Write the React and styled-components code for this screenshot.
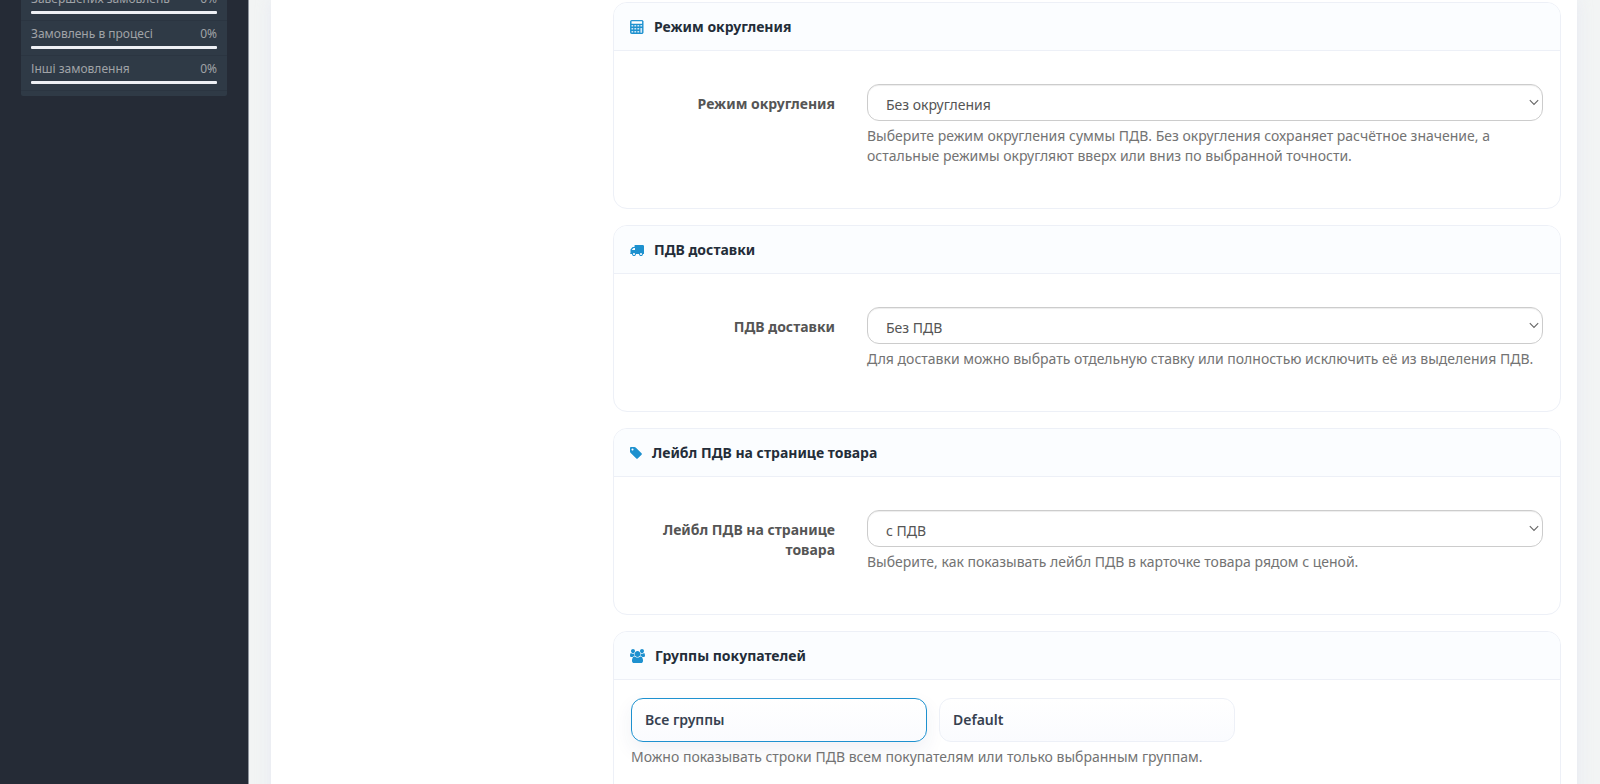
import React, { useId, useState } from "react";
import styled, { createGlobalStyle } from "styled-components";

const GlobalStyle = createGlobalStyle`
  *, *::before, *::after { box-sizing: border-box; }
  body {
    margin: 0;
    font-family: "Noto Sans", "Open Sans", sans-serif;
    font-size: 14px;
    line-height: 20px;
    color: #555;
    background: #f2f4f4;
  }
`;

const Page = styled.div`
  display: flex;
  height: 100vh;
  overflow: hidden;
`;

const Sidebar = styled.aside`
  flex: 0 0 249px;
  padding: 0 21px;
  background: #252b36;
  border-right: 1px solid #8f959e;
`;

const Stats = styled.ul`
  display: flex;
  flex-direction: column;
  justify-content: flex-end;
  height: 96px;
  margin: 0;
  padding: 0 0 5px;
  overflow: hidden;
  list-style: none;
  background: #2f3a46;
  border-radius: 0 0 2px 2px;
`;

const StatRow = styled.li`
  flex: none;
  padding: 4px 10px 6px;
  border-bottom: 1px solid #2b3541;
`;

const StatText = styled.div`
  display: flex;
  justify-content: space-between;
  margin-bottom: 3px;
  font-size: 12px;
  line-height: 18px;
  color: #a0a3a7;
`;

const StatTrack = styled.div`
  height: 3px;
  border-radius: 1px;
  background: #eef0f5;
`;

const Content = styled.main`
  flex: 1;
  min-width: 0;
  padding: 0 23px 0 22px;
  background: #f2f4f4;
`;

const Panel = styled.div`
  display: grid;
  grid-template-columns: 310px minmax(0, 1fr);
  gap: 16px;
  min-height: 100vh;
  padding: 2px 16px 0;
  background: #fff;
  box-shadow: 0 0 14px rgba(226, 230, 242, 0.7);
`;

const Cards = styled.div`
  grid-column: 2;
  display: flex;
  flex-direction: column;
  gap: 16px;
`;

const CardBox = styled.section`
  overflow: hidden;
  background: #fff;
  border: 1px solid #edf0f7;
  border-radius: 14px;
`;

const CardHeader = styled.header`
  display: flex;
  align-items: center;
  gap: 10px;
  height: 48px;
  padding: 0 16px;
  background: #fbfdff;
  border-bottom: 1px solid #edf0f7;
  color: #1e91cf;

  svg { flex: none; }
`;

const CardTitle = styled.h3`
  margin: 0;
  font-size: 14px;
  font-weight: 700;
  line-height: 20px;
  color: #242d39;
`;

const FieldRow = styled.div`
  display: grid;
  grid-template-columns: 204px minmax(0, 1fr);
  column-gap: 32px;
  padding: 33px 17px 42px;
`;

const FieldLabel = styled.label`
  padding-top: 10px;
  font-weight: 700;
  text-align: right;
  color: #555;
`;

const SelectWrap = styled.div`
  position: relative;

  svg {
    position: absolute;
    top: 15px;
    right: 4px;
    pointer-events: none;
  }
`;

const Select = styled.select`
  display: block;
  width: 100%;
  height: 37px;
  padding: 4px 18px 0;
  appearance: none;
  font: inherit;
  color: #555;
  background: #fff;
  border: 1px solid #ccc;
  border-radius: 12px;
  box-shadow: inset 0 1px 1px rgba(0, 0, 0, 0.075);
`;

const Help = styled.p`
  margin: 5px 0 0;
  color: #737373;
`;

const Groups = styled.div`
  padding: 18px 17px 42px;
`;

const GroupGrid = styled.div`
  display: grid;
  grid-template-columns: repeat(3, minmax(0, 1fr));
  gap: 12px;
`;

const GroupButton = styled.button`
  height: 44px;
  padding: 0 13px;
  font: inherit;
  font-weight: 600;
  text-align: left;
  color: #364150;
  background: linear-gradient(#fff, #fafbfe);
  border: 1px solid ${(p) => (p.$active ? "#1e91cf" : "#edf0f7")};
  border-radius: 12px;
  box-shadow: ${(p) => (p.$active ? "0 8px 20px rgba(40, 60, 110, 0.07)" : "none")};
`;

const CalculatorIcon = () => (
  <svg width="14" height="14" viewBox="0 0 14 14" fill="none" stroke="currentColor" aria-hidden="true">
    <rect x="0.6" y="0.6" width="12.4" height="12.9" rx="0.7" fill="currentColor" strokeWidth="1" />
    <path d="M1.5 1.3h10.6v2.5H1.5z" fill="#fff" stroke="none" />
    <path
      d="M1.5 5h1.7v1.5H1.5zM4.4 5h1.8v1.5H4.4zM7.4 5h1.8v1.5H7.4zM10.4 5h1.7v1.5h-1.7zM1.5 7.9h1.7v1.6H1.5zM4.4 7.9h1.8v1.6H4.4zM7.4 7.9h1.8v1.6H7.4zM10.4 7.9h1.7v4.9h-1.7zM1.5 11h1.7v1.6H1.5zM4.4 11h1.8v1.6H4.4zM7.4 11h1.8v1.6H7.4z"
      fill="#cfe7f6"
      stroke="none"
    />
  </svg>
);

const TruckIcon = () => (
  <svg width="14" height="14" viewBox="0 0 1792 1792" fill="currentColor" aria-hidden="true">
    <path d="M640 1408q0-52-38-90t-90-38-90 38-38 90 38 90 90 38 90-38 38-90zm-384-512h384V640H482q-13 0-22 9L265 844q-9 9-9 22v30zm1280 512q0-52-38-90t-90-38-90 38-38 90 38 90 90 38 90-38 38-90zm256-1088v1024q0 15-4 26.5t-13.5 18.5-16.5 11.5-23.5 6-22.5 2-25.5 0-22.5-.5q0 106-75 181t-181 75-181-75-75-181H768q0 106-75 181t-181 75-181-75-75-181h-64q-3 0-22.5.5t-25.5 0-22.5-2-23.5-6-16.5-11.5T4 1370.5 0 1344q0-26 19-45t45-19V960q0-8-.5-35t0-38 2.5-34.5 6.5-37 14-30.5 22.5-30l198-198q19-19 50.5-32t58.5-13h160V320q0-26 19-45t45-19h1024q26 0 45 19t19 45z" />
  </svg>
);

const TagIcon = () => (
  <svg width="12" height="14" viewBox="0 0 1536 1792" fill="currentColor" aria-hidden="true">
    <path d="M448 448q0-53-37.5-90.5T320 320t-90.5 37.5T192 448t37.5 90.5T320 576t90.5-37.5T448 448zm1067 576q0 53-37 90l-491 492q-39 37-91 37-53 0-90-37L91 890q-38-37-64.5-101T0 672V256q0-52 38-90t90-38h416q53 0 117 26.5T763 219l715 714q37 39 37 91z" />
  </svg>
);

const UsersIcon = () => (
  <svg width="15" height="14" viewBox="0 0 1920 1792" fill="currentColor" aria-hidden="true">
    <path d="M593 896q-162 5-265 128H194q-82 0-138-40.5T0 865q0-353 124-353 6 0 43.5 21t97.5 42.5T384 597q67 0 133-23-5 37-5 66 0 139 81 256zm1071 637q0 120-73 189.5t-194 69.5H523q-121 0-194-69.5T256 1533q0-53 3.5-103.5t14-109T300 1212t43-97.5 62-81 85.5-53.5T602 960q10 0 43 21.5t73 48 107 48 135 21.5 135-21.5 107-48 73-48 43-21.5q61 0 111.5 20t85.5 53.5 62 81 43 97.5 26.5 108.5 14 109 3.5 103.5zM640 256q0 106-75 181t-181 75-181-75-75-181 75-181T384 0t181 75 75 181zm704 384q0 159-112.5 271.5T960 1024 688.5 911.5 576 640t112.5-271.5T960 256t271.5 112.5T1344 640zm576 225q0 78-56 118.5t-138 40.5h-134q-103-123-265-128 81-117 81-256 0-29-5-66 66 23 133 23 59 0 119-21.5t97.5-42.5 43.5-21q124 0 124 353zm-128-609q0 106-75 181t-181 75-181-75-75-181 75-181 181-75 181 75 75 181z" />
  </svg>
);

const Chevron = () => (
  <svg width="10" height="7" viewBox="0 0 10 7" fill="none" stroke="#666" strokeWidth="1.1" aria-hidden="true">
    <path d="M0.8 1.2l4.2 4.2 4.2-4.2" />
  </svg>
);

function Card({ icon, title, children }) {
  return (
    <CardBox>
      <CardHeader>
        {icon}
        <CardTitle>{title}</CardTitle>
      </CardHeader>
      {children}
    </CardBox>
  );
}

function SelectCard({ icon, title, value, help }) {
  const id = useId();
  return (
    <Card icon={icon} title={title}>
      <FieldRow>
        <FieldLabel htmlFor={id}>{title}</FieldLabel>
        <div>
          <SelectWrap>
            <Select id={id}>
              <option>{value}</option>
            </Select>
            <Chevron />
          </SelectWrap>
          <Help>{help}</Help>
        </div>
      </FieldRow>
    </Card>
  );
}

const stats = ["Завершених замовлень", "Замовлень в процесі", "Інші замовлення"];
const groups = ["Все группы", "Default"];

export default function App() {
  const [group, setGroup] = useState(groups[0]);
  return (
    <Page>
      <GlobalStyle />
      <Sidebar>
        <Stats>
          {stats.map((name) => (
            <StatRow key={name}>
              <StatText>
                <span>{name}</span>
                <span>0%</span>
              </StatText>
              <StatTrack />
            </StatRow>
          ))}
        </Stats>
      </Sidebar>
      <Content>
        <Panel>
          <Cards>
            <SelectCard
              icon={<CalculatorIcon />}
              title="Режим округления"
              value="Без округления"
              help="Выберите режим округления суммы ПДВ. Без округления сохраняет расчётное значение, а остальные режимы округляют вверх или вниз по выбранной точности."
            />
            <SelectCard
              icon={<TruckIcon />}
              title="ПДВ доставки"
              value="Без ПДВ"
              help="Для доставки можно выбрать отдельную ставку или полностью исключить её из выделения ПДВ."
            />
            <SelectCard
              icon={<TagIcon />}
              title="Лейбл ПДВ на странице товара"
              value="с ПДВ"
              help="Выберите, как показывать лейбл ПДВ в карточке товара рядом с ценой."
            />
            <Card icon={<UsersIcon />} title="Группы покупателей">
              <Groups>
                <GroupGrid>
                  {groups.map((name) => (
                    <GroupButton
                      key={name}
                      type="button"
                      $active={name === group}
                      aria-pressed={name === group}
                      onClick={() => setGroup(name)}
                    >
                      {name}
                    </GroupButton>
                  ))}
                </GroupGrid>
                <Help>Можно показывать строки ПДВ всем покупателям или только выбранным группам.</Help>
              </Groups>
            </Card>
          </Cards>
        </Panel>
      </Content>
    </Page>
  );
}
